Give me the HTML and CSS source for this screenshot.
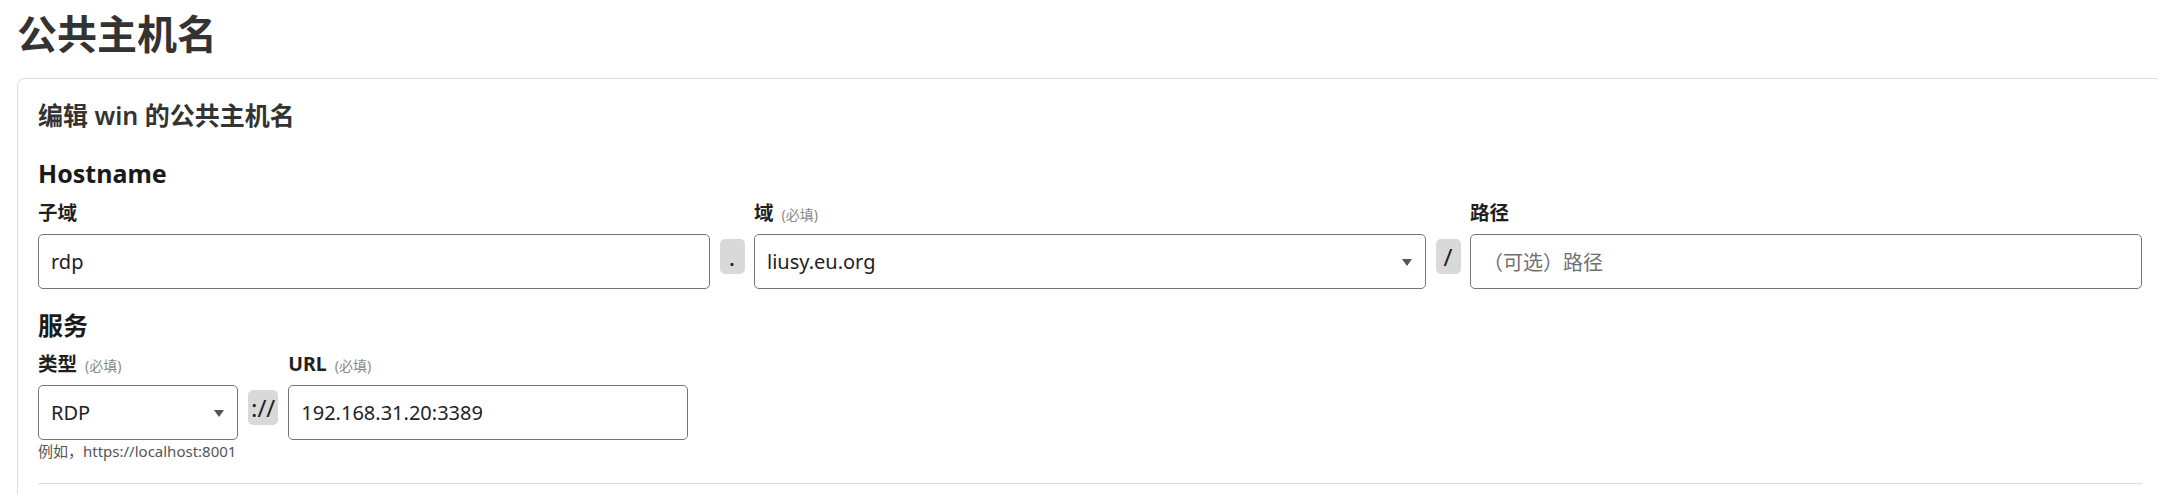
FILE: index.html
```html
<!DOCTYPE html>
<html lang="zh-CN">
<head>
<meta charset="utf-8">
<title>公共主机名</title>
<link rel="stylesheet" href="styles.css">
</head>
<body>
<div class="page">
  <h1 class="page-title">公共主机名</h1>
  <section class="card">
    <h2 class="card-title">编辑 win 的公共主机名</h2>

    <h3 class="group-title">Hostname</h3>
    <div class="hostname-grid">
      <label class="label">子域</label>
      <label class="label col-3">域 <span class="req">(必填)</span></label>
      <label class="label col-5">路径</label>

      <div class="control">rdp</div>
      <div class="sep">.</div>
      <div class="control select">liusy.eu.org<span class="caret"></span></div>
      <div class="sep">/</div>
      <div class="control placeholder">（可选）路径</div>
    </div>

    <h3 class="group-title service-title">服务</h3>
    <div class="service-grid">
      <label class="label">类型 <span class="req">(必填)</span></label>
      <label class="label col-3">URL <span class="req">(必填)</span></label>

      <div class="control select">RDP<span class="caret"></span></div>
      <div class="sep">://</div>
      <div class="control">192.168.31.20:3389</div>

      <div class="help">例如，https://localhost:8001</div>
    </div>

    <hr class="divider">
  </section>
</div>
</body>
</html>
```

FILE: styles.css
```css
html, body {
  margin: 0;
  padding: 0;
  background: #ffffff;
  overflow: hidden;
}

body {
  font-family: "Noto Sans", "Noto Sans CJK SC", sans-serif;
  color: #222222;
}

.page {
  padding: 0 17px;
}

.page-title {
  margin: 9px 0 19px;
  font-size: 40px;
  line-height: 50px;
  font-weight: 700;
  color: #333333;
}

.card {
  margin-right: -22px;
  border: 1px solid #dddddd;
  border-radius: 8px;
  padding: 19px 20px 40px;
  background: #ffffff;
}

.card-title {
  margin: 0 0 24px;
  font-size: 25px;
  line-height: 34px;
  font-weight: 600;
  color: #333333;
}

.group-title {
  margin: 0 0 9px;
  font-size: 25px;
  line-height: 34px;
  font-weight: 700;
  color: #1a1a1a;
}

.service-title {
  margin-top: 19px;
  margin-bottom: 8px;
}

.hostname-grid {
  display: grid;
  grid-template-columns: 1fr 25px 1fr 25px 1fr;
  column-gap: 9.5px;
  row-gap: 5px;
}

.service-grid {
  display: grid;
  grid-template-columns: 200px auto 400px;
  justify-content: start;
  column-gap: 10px;
  row-gap: 5px;
}

.label {
  grid-row: 1;
  grid-column: 1;
  font-size: 19.5px;
  line-height: 28px;
  font-weight: 700;
  color: #1f1f1f;
  white-space: nowrap;
}

.label.col-3 { grid-column: 3; }
.label.col-5 { grid-column: 5; }

.req {
  margin-left: 3px;
  font-size: 14px;
  font-weight: 400;
  color: #8a8a8a;
}

.control {
  grid-row: 2;
  position: relative;
  height: 55px;
  box-sizing: border-box;
  border: 1px solid #767676;
  border-radius: 5px;
  padding: 0 12px;
  display: flex;
  align-items: center;
  font-size: 20px;
  color: #222222;
  background: #ffffff;
  white-space: nowrap;
}

.placeholder {
  color: #707070;
}

.caret {
  position: absolute;
  right: 13px;
  top: 50%;
  margin-top: -3px;
  width: 0;
  height: 0;
  border-left: 5.5px solid transparent;
  border-right: 5.5px solid transparent;
  border-top: 7px solid #555555;
}

.sep {
  grid-row: 2;
  align-self: start;
  margin-top: 5px;
  min-width: 25px;
  height: 35px;
  box-sizing: border-box;
  padding: 0 3px;
  border-radius: 5px;
  background: #d9d9d9;
  font-size: 24px;
  line-height: 35px;
  text-align: center;
  color: #222222;
}

.help {
  grid-row: 3;
  grid-column: 1;
  margin-top: -4px;
  font-size: 15px;
  line-height: 20px;
  color: #555555;
  white-space: nowrap;
}

.divider {
  margin: 22px 0 0;
  border: 0;
  border-top: 1px solid #dddddd;
  height: 0;
}
```
